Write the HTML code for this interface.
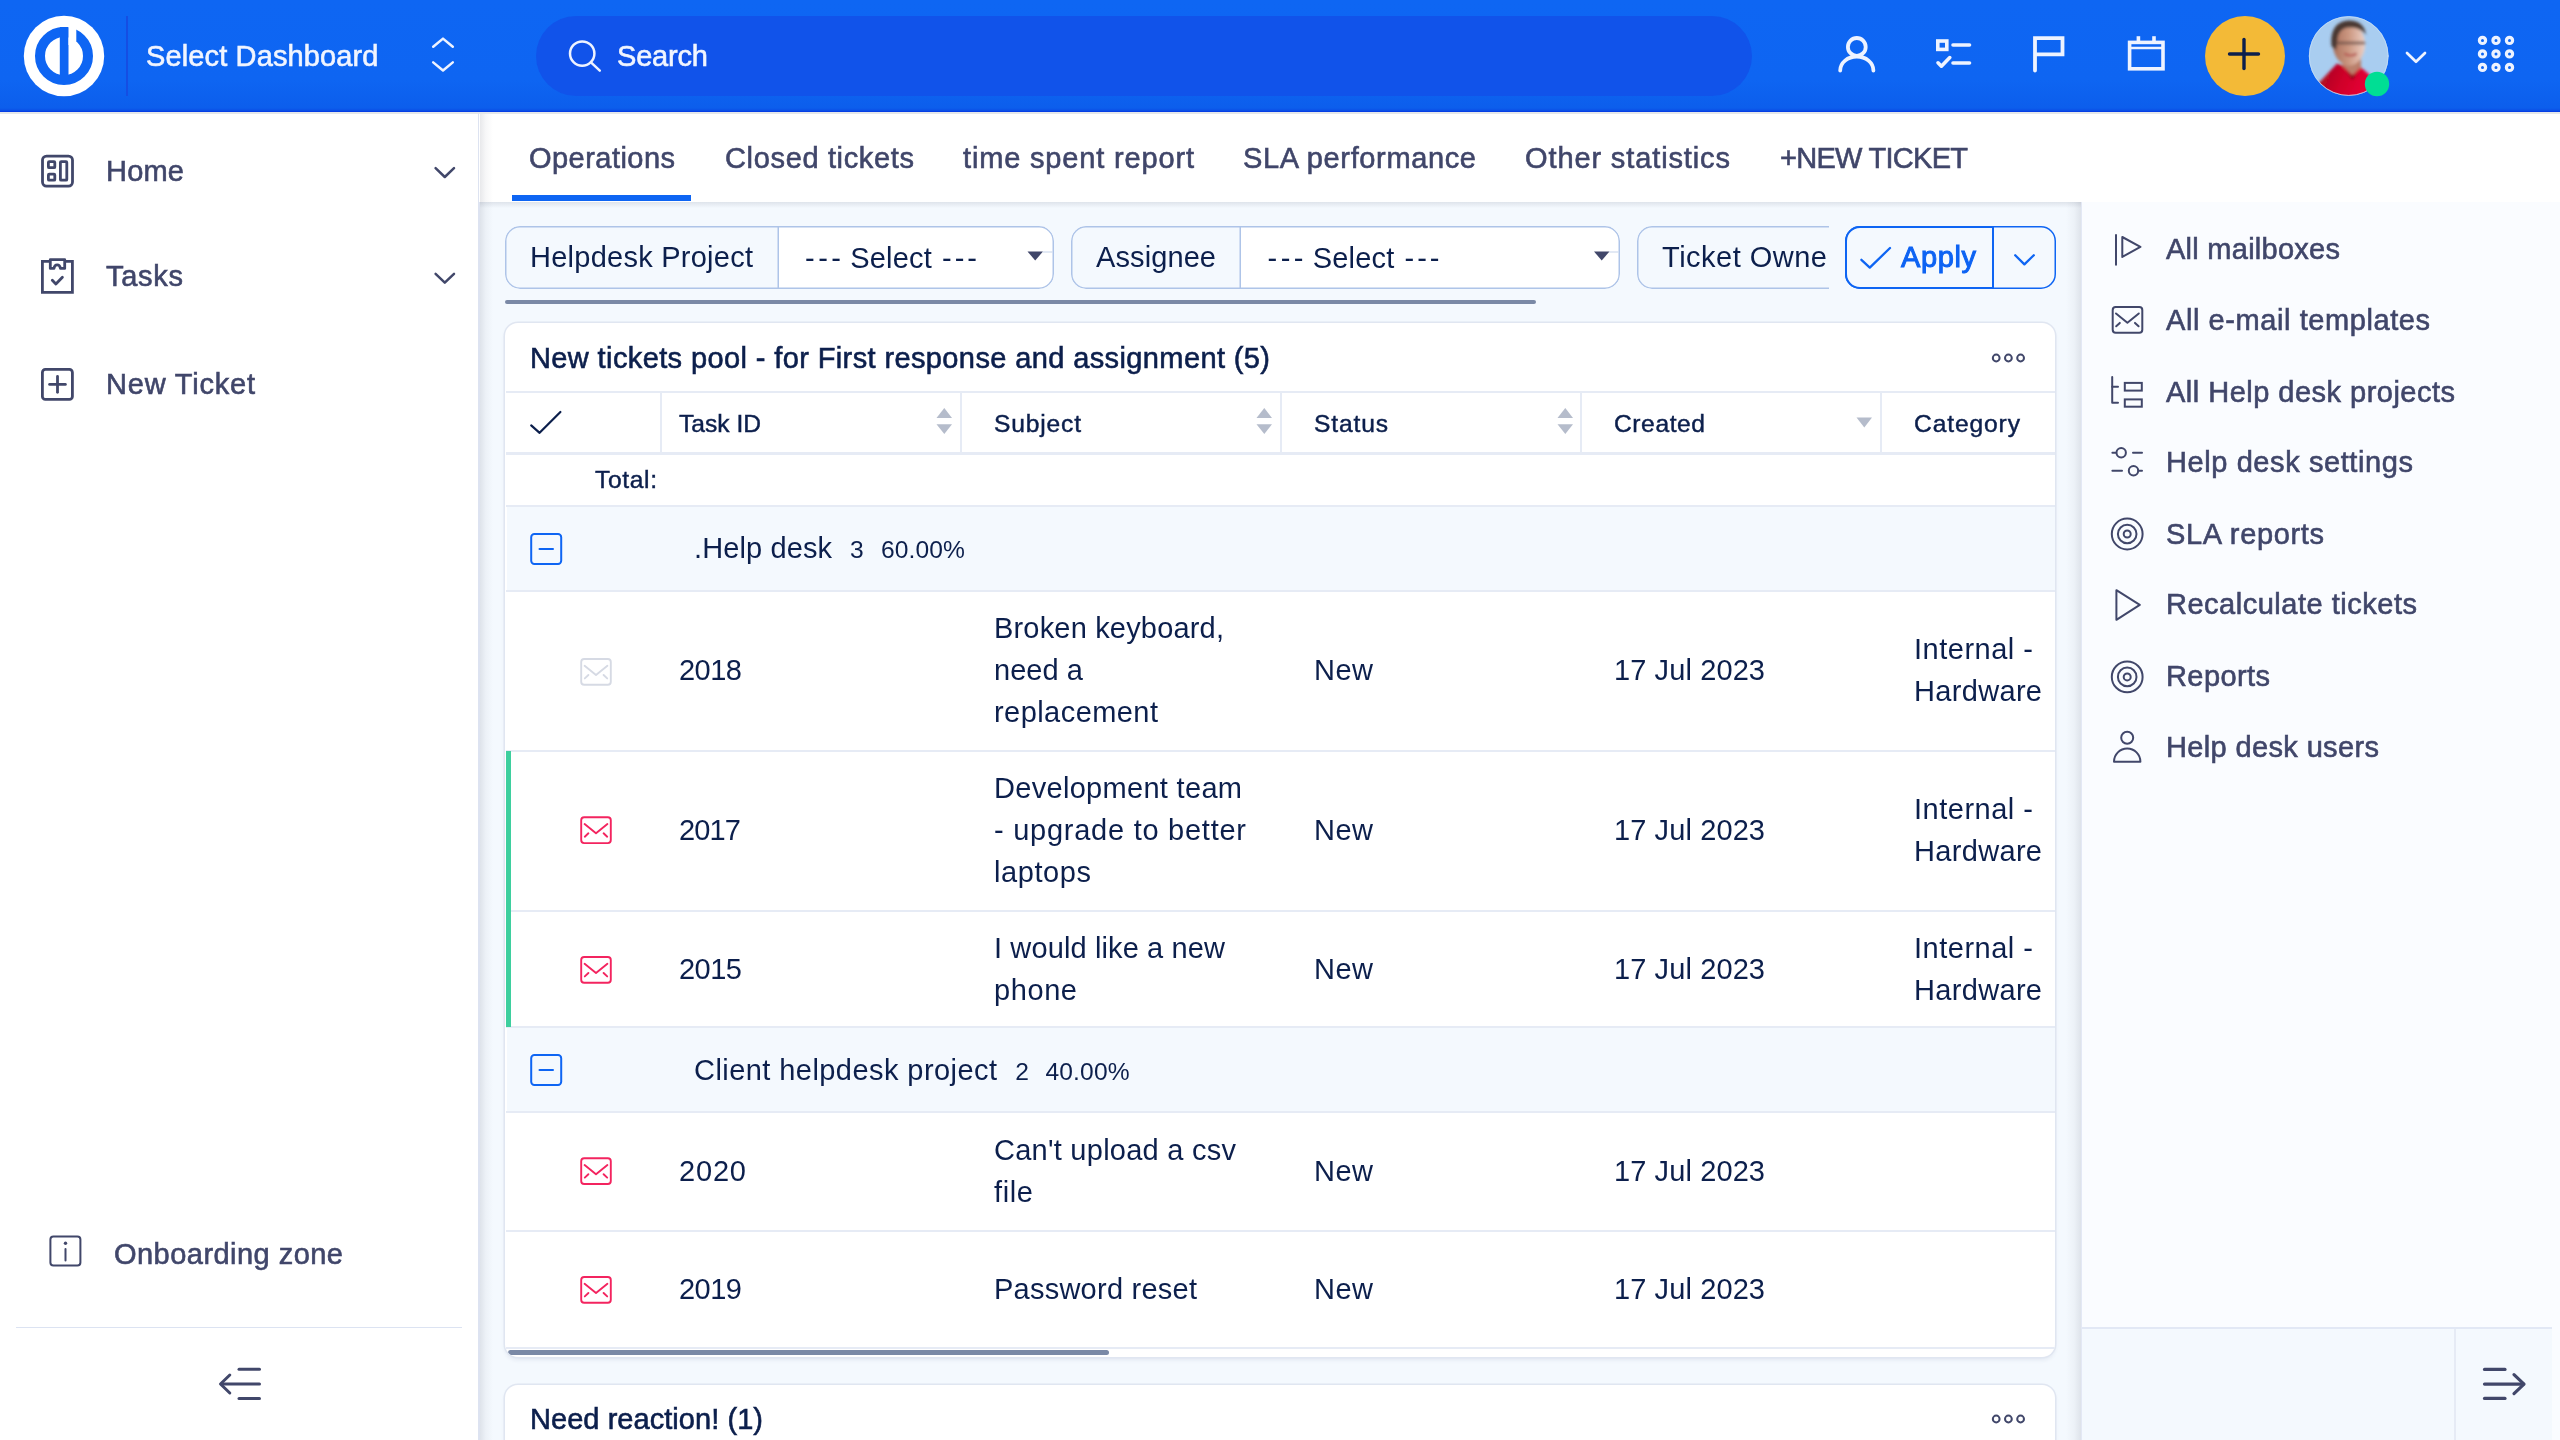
<!DOCTYPE html>
<html lang="en"><head><meta charset="utf-8"><title>Helpdesk dashboard</title>
<style>
html,body{margin:0;padding:0}
body{width:2560px;height:1440px;overflow:hidden;position:relative;background:#f4f9fe;font-family:"Liberation Sans",sans-serif}
.a{position:absolute}
.t{position:absolute;white-space:pre;line-height:1;-webkit-font-smoothing:antialiased}
svg{position:absolute;overflow:visible}
#hdr{left:0;top:0;width:2560px;height:112px;background:linear-gradient(to bottom,#0e66f3 0,#0e65f2 80px,#0c5eec 108px,#0a4fe6 110.5px,#0236e4 112px)}
#pill{left:536px;top:16px;width:1216px;height:80px;border-radius:40px;background:#1153ea}
#side{left:0;top:112px;width:478.5px;height:1328px;background:#fff;border-right:1px solid #dde3f0}
#tabs{left:479px;top:112px;width:2081px;height:89.5px;background:#fff}
#rp{left:2080.5px;top:201.5px;width:480px;height:1239px;background:#fafcff;border-left:1.5px solid #e3e8f5;box-sizing:border-box}
#rpb{left:2082px;top:1327px;width:470px;height:113px;background:#f4f9fe;border-top:2px solid #e2e8f5;box-sizing:border-box}
.card{background:#fff;border-radius:13px;box-shadow:0 0 0 1.5px #e0e6f1, 0 2.5px 4px rgba(40,60,110,.09)}
.hl{position:absolute;height:2px;background:#e6ebf5}
.vl{position:absolute;width:2px;background:#e6ebf5}
.grp{position:absolute;left:507px;width:1549px;background:#f4f9fe}
.pillf{position:absolute;top:225.5px;height:63px;box-sizing:border-box;border-radius:15px;background:#f4f9fe;overflow:hidden}
.pillf::after{content:"";position:absolute;left:0;top:0;right:0;bottom:0;border-radius:15px;box-shadow:inset 0 0 0 1.5px #aec4e8}
.sel{position:absolute;top:0;bottom:0;right:0;background:#fff;box-shadow:-1.5px 0 0 0 #aec4e8}
</style></head><body>
<!-- header -->
<div id="hdr" class="a"></div>
<div id="pill" class="a"></div>
<div class="a" style="left:126px;top:16px;width:2px;height:80px;background:#154ee3"></div>
<!-- sidebar -->
<div id="side" class="a"></div>
<div class="hl" style="left:16px;top:1327px;width:446px;height:1px;background:#dce3f2"></div>
<div class="a" style="left:478.4px;top:113px;width:1.3px;height:1327px;background:#dde3f1"></div>
<!-- tabs -->
<div id="tabs" class="a"></div>
<div class="a" style="left:512px;top:195px;width:179px;height:6px;background:#0e65f3"></div>
<div class="a" style="left:479.5px;top:113px;width:13px;height:1327px;background:linear-gradient(to right,rgba(30,35,60,.10),rgba(30,35,60,.035) 45%,rgba(30,35,60,0))"></div>
<div class="a" style="left:479.5px;top:201.5px;width:1601px;height:6px;background:linear-gradient(to bottom,rgba(30,40,70,.10),rgba(30,40,70,0))"></div>
<div class="a" style="left:2066px;top:201.5px;width:14.5px;height:1239px;background:linear-gradient(to left,rgba(30,35,60,.10),rgba(30,35,60,.035) 45%,rgba(30,35,60,0))"></div>
<div class="a" style="left:0;top:112px;width:2560px;height:1.5px;background:rgba(225,228,232,.9)"></div>
<!-- right panel -->
<div id="rp" class="a"></div>
<div id="rpb" class="a"></div>
<div class="vl" style="left:2454px;top:1329px;height:111px"></div>
<!-- filters -->
<div class="pillf" style="left:504.5px;width:549.5px"><div class="sel" style="left:274px"></div></div>
<div class="pillf" style="left:1070.5px;width:549.5px"><div class="sel" style="left:170px"></div></div>
<div class="a" style="left:1637px;top:225.5px;width:192px;height:63px;overflow:hidden"><div class="pillf" style="left:0;top:0;width:400px"></div></div>
<div class="a" style="left:1845px;top:226px;width:211px;height:63px;box-sizing:border-box;box-shadow:inset 0 0 0 1.5px #0e65f3;border-radius:15px"></div><div class="a" style="left:1845px;top:226px;width:149px;height:63px;box-sizing:border-box;border:2px solid #0e65f3;border-radius:15px 0 0 15px"></div>

<div class="a" style="left:505px;top:299.5px;width:1031px;height:4.5px;border-radius:3px;background:#7a89a6"></div>
<!-- card 1 -->
<div class="a card" style="left:505px;top:323px;width:1550px;height:1034px"></div>
<div class="a" style="left:0;top:0;width:2560px;height:1440px;clip-path:inset(323px 505px 83px 505px round 13px)">
<div class="hl" style="left:506px;top:391px;width:1549px"></div>
<div class="hl" style="left:506px;top:452px;width:1549px;height:3px"></div>
<div class="vl" style="left:660px;top:393px;height:59px"></div>
<div class="vl" style="left:960px;top:393px;height:59px"></div>
<div class="vl" style="left:1280px;top:393px;height:59px"></div>
<div class="vl" style="left:1580px;top:393px;height:59px"></div>
<div class="vl" style="left:1880px;top:393px;height:59px"></div>
<div class="hl" style="left:506px;top:505px;width:1549px"></div>
<div class="grp" style="top:507px;height:84px"></div>
<div class="hl" style="left:506px;top:590px;width:1549px"></div>
<div class="hl" style="left:506px;top:750px;width:1549px"></div>
<div class="hl" style="left:506px;top:910px;width:1549px"></div>
<div class="hl" style="left:506px;top:1026px;width:1549px"></div>
<div class="grp" style="top:1028px;height:84px"></div>
<div class="hl" style="left:506px;top:1111px;width:1549px"></div>
<div class="hl" style="left:506px;top:1230px;width:1549px"></div>
<div class="hl" style="left:506px;top:1347px;width:1549px"></div>
<div class="a" style="left:506px;top:751px;width:4.6px;height:276px;background:#3ecf9e"></div>
<div class="a" style="left:508px;top:1350.3px;width:601px;height:5px;border-radius:3px;background:#7a89a6"></div>
</div>
<!-- card 2 -->
<div class="a card" style="left:505px;top:1385px;width:1550px;height:120px"></div>
<svg width="2560" height="1440" viewBox="0 0 2560 1440" style="left:0;top:0" fill="none" stroke-linecap="round" stroke-linejoin="round">
<!-- logo -->
<circle cx="64" cy="56" r="40.2" fill="#fff"/>
<circle cx="64" cy="56" r="24" stroke="#0e65f3" stroke-width="10"/>
<rect x="59.8" y="27" width="8.7" height="52" fill="#0e65f3"/>
<path d="M68.5 24 H76.3 V41.5 L72.5 45 H68.5 Z" fill="#fff"/>
<!-- select chevrons -->
<g stroke="#eef3ff" stroke-width="2.5"><path d="M433.2 46.7 L443 38.6 L452.8 46.7"/><path d="M433.2 62.4 L443 70.5 L452.8 62.4"/></g>
<!-- search -->
<g stroke="#eef3ff" stroke-width="2.5"><circle cx="582.2" cy="53.6" r="12.2"/><path d="M591.5 62.8 L599.8 70.6"/></g>
<!-- user -->
<g stroke="#eef3ff" stroke-width="3.8"><circle cx="1856.8" cy="46.9" r="8.9"/><path d="M1840.2 70.5 A16.6 14 0 0 1 1873.4 70.5"/></g>
<!-- tasks -->
<g stroke="#eef3ff" stroke-width="3.6"><rect x="1937.8" y="41" width="9" height="8.4" stroke-linejoin="miter"/><path d="M1953 45 H1969.5"/><path d="M1953 63 H1969.5"/><path d="M1938 62.8 L1941.4 66.2 L1949.8 57.6"/></g>
<!-- flag -->
<g stroke="#eef3ff" stroke-width="3.8" stroke-linejoin="miter"><path d="M2035 70.5 V38.2 H2062.5 V54.4 H2035"/></g>
<!-- calendar -->
<g stroke="#eef3ff" stroke-width="3.6" stroke-linejoin="miter" stroke-linecap="butt"><rect x="2129.6" y="42.4" width="33.4" height="26.4"/><path d="M2129.6 48 H2163" stroke-width="2.6"/><path d="M2138.4 36.2 V42"/><path d="M2154 36.2 V42"/></g>
<!-- plus -->
<circle cx="2245" cy="56" r="40" fill="#f3ba37"/>
<g stroke="#0c1f4c" stroke-width="3.4"><path d="M2229.5 54 H2258.5"/><path d="M2244 39.5 V68.5"/></g>
<!-- avatar -->
<defs><clipPath id="avc"><circle cx="2348.7" cy="56" r="39.6"/></clipPath><filter id="bl" x="-20%" y="-20%" width="140%" height="140%"><feGaussianBlur stdDeviation="1.5"/></filter>
<linearGradient id="skin" x1="0" x2="1" y1="0" y2="0"><stop offset="0" stop-color="#a96f59"/><stop offset="0.5" stop-color="#cc9882"/><stop offset="1" stop-color="#ecd0c5"/></linearGradient>
<linearGradient id="shirt" x1="0" x2="1" y1="0" y2="0.3"><stop offset="0" stop-color="#9c0b1e"/><stop offset="0.5" stop-color="#cf0329"/><stop offset="1" stop-color="#ec0438"/></linearGradient></defs>
<circle cx="2348.7" cy="56" r="39.8" fill="#a9cdf0"/>
<g clip-path="url(#avc)"><g filter="url(#bl)" stroke="none">
<path d="M2316 86 L2337 63.5 L2344 66 L2352 74 L2360.5 67 L2371 76 L2378 104 L2316 104 Z" fill="url(#shirt)"/>
<path d="M2340 56 L2361 56 L2361 67 L2352.5 75 L2343 66 Z" fill="#b9806c"/>
<path d="M2346 70 L2352.5 80 L2357 72 L2352.5 76 Z" fill="#7a0a18"/>
<ellipse cx="2349" cy="44.5" rx="16" ry="21" fill="url(#skin)"/>
<path d="M2331.5 46 C2330 30 2336 21.5 2348 20.5 C2358 20 2365 25 2366 35 C2362 29.5 2356 27 2349 27.5 C2342 28 2338.5 32 2337.5 39 C2337 43 2337 46 2336 50 Z" fill="#4a3933"/>
<path d="M2338 43 H2364" stroke="#6a4d45" stroke-width="3.2" opacity=".75"/>
<path d="M2345 54 Q2351 57 2356 54" stroke="#b5524f" stroke-width="2.2" fill="none"/>
</g></g>
<circle cx="2348.7" cy="56" r="39.4" stroke="#c6ddf6" stroke-width="1" fill="none" opacity=".8"/>
<circle cx="2377" cy="84" r="12.2" fill="#00de94"/>
<path d="M2407 53 L2416 61.8 L2425 53" stroke="#eef3ff" stroke-width="2.7"/>
<!-- grid -->
<g stroke="#eef3ff" stroke-width="3.2">
<circle cx="2482.5" cy="40.4" r="3.1"/><circle cx="2496" cy="40.4" r="3.1"/><circle cx="2509.5" cy="40.4" r="3.1"/>
<circle cx="2482.5" cy="53.9" r="3.1"/><circle cx="2496" cy="53.9" r="3.1"/><circle cx="2509.5" cy="53.9" r="3.1"/>
<circle cx="2482.5" cy="67.4" r="3.1"/><circle cx="2496" cy="67.4" r="3.1"/><circle cx="2509.5" cy="67.4" r="3.1"/>
</g>
<!-- sidebar icons -->
<g stroke="#41476a" stroke-width="2.8">
<rect x="42.5" y="156.1" width="30" height="30" rx="4"/>
<rect x="48.4" y="161.7" width="6.4" height="6" rx="0.8"/><rect x="48.4" y="174.2" width="6.4" height="6" rx="0.8"/><rect x="60.4" y="161.7" width="6.4" height="18.5" rx="0.8"/>
<path d="M49.5 261.4 H42.4 V292.3 H72.4 V261.4 H65.3" stroke-linejoin="miter"/>
<path d="M50.3 259.6 H64.7 V268.4 H60.4 C59.8 263.8 54.6 263.8 54 268.4 H50.3 Z"/>
<path d="M52.3 280.3 L55.9 284 L62.4 277.2"/>
<rect x="42.4" y="369.4" width="30" height="30" rx="3"/><path d="M49.6 384.4 H65.4"/><path d="M57.5 376.5 V392.3"/>
</g>
<g stroke="#41476a" stroke-width="2.5"><path d="M435.6 168.2 L444.8 177 L454 168.2"/><path d="M435.6 273.9 L444.8 282.7 L454 273.9"/></g>
<g stroke="#41476a" stroke-width="2"><rect x="50.4" y="1236.4" width="30" height="29.2" rx="3"/><path d="M65.5 1249 V1260.4"/></g>
<circle cx="65.5" cy="1243.2" r="1.7" fill="#41476a"/>
<g stroke="#41476a" stroke-width="3"><path d="M239 1369.3 H259.5"/><path d="M221.5 1384 H259.5"/><path d="M239 1398.4 H259.5"/><path d="M229.8 1375 L220.5 1384 L229.8 1393"/></g>
<g stroke="#41476a" stroke-width="3.2"><path d="M2484.5 1369.4 H2505"/><path d="M2484.5 1384.1 H2523.5"/><path d="M2484.5 1398.4 H2505"/><path d="M2514 1374.6 L2524 1384.1 L2514 1393.6"/></g>
<!-- filter arrows -->
<g fill="#41476a" stroke="none"><path d="M1027.5 251.5 H1043 L1035.2 260.5 Z"/><path d="M1594 251.5 H1609.5 L1601.7 260.5 Z"/></g>
<g stroke="#c5d3ea" stroke-width="1"><path d="M1043 252 H1052"/><path d="M1609.5 252 H1618"/></g>
<!-- apply -->
<g stroke="#0e65f3" stroke-width="2.3"><path d="M1861.4 259.8 L1869.8 267.6 L1890 248"/><path d="M2015.2 255.2 L2024.4 264.4 L2033.8 255.2"/></g>
<!-- ooo -->
<g stroke="#41476a" stroke-width="2"><circle cx="1996.2" cy="358" r="3.4"/><circle cx="2008.4" cy="358" r="3.4"/><circle cx="2020.6" cy="358" r="3.4"/>
<circle cx="1996.2" cy="1419" r="3.4"/><circle cx="2008.4" cy="1419" r="3.4"/><circle cx="2020.6" cy="1419" r="3.4"/></g>
<!-- header check -->
<path d="M531.2 425.4 L539.6 432.8 L560.4 412" stroke="#0c1f4c" stroke-width="2.2"/>
<!-- sort arrows -->
<g fill="#b5bccb" stroke="none">
<path d="M936.5 418 L944.3 408 L952 418 Z"/><path d="M936.5 424.3 H952 L944.3 434 Z"/>
<path d="M1256.5 418 L1264.3 408 L1272 418 Z"/><path d="M1256.5 424.3 H1272 L1264.3 434 Z"/>
<path d="M1557.5 418 L1565.3 408 L1573 418 Z"/><path d="M1557.5 424.3 H1573 L1565.3 434 Z"/>
<path d="M1856.5 417.5 H1872 L1864.3 427.5 Z"/>
</g>
<!-- group toggles -->
<g stroke="#0e65f3" stroke-width="2"><rect x="531.2" y="534" width="30" height="30" rx="3.2"/><path d="M539.5 549 H553"/>
<rect x="531.2" y="1055" width="30" height="30" rx="3.2"/><path d="M539.5 1070 H553"/></g>
<!-- mail icons -->
<g id="ml" stroke-width="1.9"><rect x="581.2" y="659" width="29.6" height="25.8" rx="3"/><path d="M584.6 665.8 L596 675 L607.4 665.8"/><path d="M584.8 678.4 L588.4 675"/><path d="M607.2 678.4 L603.6 675"/></g>
</svg>
<svg width="2560" height="1440" viewBox="0 0 2560 1440" style="left:0;top:0" fill="none" stroke-linecap="round" stroke-linejoin="round">
<g stroke="#d6dae4"><use href="#ml"/></g>
<g stroke="#f3245f"><use href="#ml" y="158.3"/><use href="#ml" y="298"/><use href="#ml" y="499.2"/><use href="#ml" y="618"/></g>
<!-- right panel icons -->
<g stroke="#41476a" stroke-width="2">
<path d="M2116 235 V264.8"/><path d="M2122.3 237 L2140.4 246.9 L2122.3 256.9 Z"/>
<rect x="2112.7" y="307" width="29.6" height="25.8" rx="3"/><path d="M2116 313.5 L2127.4 322.7 L2138.8 313.5"/><path d="M2116.2 326.3 L2119.8 322.9"/><path d="M2138.6 326.3 L2135 322.9"/>
<path d="M2112.2 377 V402.8 H2118"/><path d="M2112.2 386.7 H2118"/><rect x="2124.8" y="382.9" width="17" height="7.7" stroke-linejoin="miter"/><rect x="2124.8" y="399.4" width="17" height="7.3" stroke-linejoin="miter"/>
<circle cx="2121.2" cy="452.8" r="4.7"/><path d="M2112.4 452.8 H2116"/><path d="M2133 452.8 H2142"/><circle cx="2133.5" cy="470.8" r="4.7"/><path d="M2112.4 470.8 H2122"/><path d="M2138.6 470.8 H2142"/>
<circle cx="2127.2" cy="534" r="15.4"/><circle cx="2127.2" cy="534" r="9.3"/><circle cx="2127.2" cy="534" r="3.5"/>
<path d="M2116.4 590.2 L2139.8 604.9 L2116.4 619.8 Z"/>
<circle cx="2127.2" cy="676.9" r="15.4"/><circle cx="2127.2" cy="676.9" r="9.3"/><circle cx="2127.2" cy="676.9" r="3.5"/>
<circle cx="2127.2" cy="737.7" r="6"/><path d="M2114 761.7 A13.2 13.2 0 0 1 2140.4 761.7 Z"/>
</g>
</svg>

<div style="position:absolute;left:0;top:0;width:2560px;height:1440px;will-change:transform">
<span class="t" style="left:146px;top:42px;font-size:29px;color:#f1f5ff;letter-spacing:0.131px;-webkit-text-stroke:0.6px #f1f5ff">Select Dashboard</span>
<span class="t" style="left:617px;top:42px;font-size:29px;color:#f1f5ff;letter-spacing:-0.178px;-webkit-text-stroke:0.6px #f1f5ff">Search</span>
<span class="t" style="left:106px;top:157px;font-size:29px;color:#40466a;letter-spacing:0.214px;-webkit-text-stroke:0.6px #40466a">Home</span>
<span class="t" style="left:106px;top:262px;font-size:29px;color:#40466a;letter-spacing:0.715px;-webkit-text-stroke:0.6px #40466a">Tasks</span>
<span class="t" style="left:106px;top:370px;font-size:29px;color:#40466a;letter-spacing:0.797px;-webkit-text-stroke:0.6px #40466a">New Ticket</span>
<span class="t" style="left:114px;top:1240px;font-size:29px;color:#40466a;letter-spacing:0.464px;-webkit-text-stroke:0.6px #40466a">Onboarding zone</span>
<span class="t" style="left:529px;top:144px;font-size:29px;color:#40466a;letter-spacing:0.460px;-webkit-text-stroke:0.6px #40466a">Operations</span>
<span class="t" style="left:725px;top:144px;font-size:29px;color:#40466a;letter-spacing:0.653px;-webkit-text-stroke:0.6px #40466a">Closed tickets</span>
<span class="t" style="left:963px;top:144px;font-size:29px;color:#40466a;letter-spacing:0.837px;-webkit-text-stroke:0.6px #40466a">time spent report</span>
<span class="t" style="left:1243px;top:144px;font-size:29px;color:#40466a;letter-spacing:0.637px;-webkit-text-stroke:0.6px #40466a">SLA performance</span>
<span class="t" style="left:1525px;top:144px;font-size:29px;color:#40466a;letter-spacing:0.881px;-webkit-text-stroke:0.6px #40466a">Other statistics</span>
<span class="t" style="left:1780px;top:144px;font-size:29px;color:#40466a;letter-spacing:-0.725px;-webkit-text-stroke:0.6px #40466a">+NEW TICKET</span>
<span class="t" style="left:530px;top:243px;font-size:29px;color:#0c1f4c;letter-spacing:0.252px">Helpdesk Project</span>
<span class="t" style="left:805px;top:244px;font-size:29px;color:#0c1f4c;letter-spacing:3.508px">---</span>
<span class="t" style="left:850.3px;top:244px;font-size:29px;color:#0c1f4c;letter-spacing:0.178px">Select</span>
<span class="t" style="left:942px;top:244px;font-size:29px;color:#0c1f4c;letter-spacing:3.008px">---</span>
<span class="t" style="left:1096px;top:243px;font-size:29px;color:#0c1f4c;letter-spacing:0.098px">Assignee</span>
<span class="t" style="left:1267.5px;top:244px;font-size:29px;color:#0c1f4c;letter-spacing:3.508px">---</span>
<span class="t" style="left:1312.8px;top:244px;font-size:29px;color:#0c1f4c;letter-spacing:0.178px">Select</span>
<span class="t" style="left:1404.5px;top:244px;font-size:29px;color:#0c1f4c;letter-spacing:3.008px">---</span>
<span class="t" style="left:1662px;top:243px;font-size:29px;color:#0c1f4c;letter-spacing:0.491px">Ticket Owne</span>
<span class="t" style="left:1901px;top:243px;font-size:29px;color:#0d63f3;letter-spacing:0.613px;-webkit-text-stroke:1.0px #0d63f3">Apply</span>
<span class="t" style="left:530px;top:344px;font-size:29px;color:#0c1f4c;letter-spacing:0.385px;-webkit-text-stroke:0.6px #0c1f4c">New tickets pool - for First response and assignment (5)</span>
<span class="t" style="left:679px;top:412px;font-size:24.6px;color:#0c1f4c;letter-spacing:0.000px;-webkit-text-stroke:0.45px #0c1f4c">Task ID</span>
<span class="t" style="left:994px;top:412px;font-size:24.6px;color:#0c1f4c;letter-spacing:0.828px;-webkit-text-stroke:0.45px #0c1f4c">Subject</span>
<span class="t" style="left:1314px;top:412px;font-size:24.6px;color:#0c1f4c;letter-spacing:0.853px;-webkit-text-stroke:0.45px #0c1f4c">Status</span>
<span class="t" style="left:1614px;top:412px;font-size:24.6px;color:#0c1f4c;letter-spacing:0.583px;-webkit-text-stroke:0.45px #0c1f4c">Created</span>
<span class="t" style="left:1914px;top:412px;font-size:24.6px;color:#0c1f4c;letter-spacing:0.886px;-webkit-text-stroke:0.45px #0c1f4c">Category</span>
<span class="t" style="left:595px;top:468px;font-size:24.6px;color:#0c1f4c;letter-spacing:0.641px;-webkit-text-stroke:0.45px #0c1f4c">Total:</span>
<span class="t" style="left:694px;top:534px;font-size:29px;color:#0c1f4c;letter-spacing:0.109px">.Help desk</span>
<span class="t" style="left:850px;top:538px;font-size:24.6px;color:#0c1f4c;letter-spacing:0.000px">3</span>
<span class="t" style="left:881px;top:538px;font-size:24.6px;color:#0c1f4c;letter-spacing:0.116px">60.00%</span>
<span class="t" style="left:679px;top:656px;font-size:29px;color:#0c1f4c;letter-spacing:-0.505px">2018</span>
<span class="t" style="left:994px;top:614px;font-size:29px;color:#0c1f4c;letter-spacing:0.179px">Broken keyboard,</span>
<span class="t" style="left:994px;top:656px;font-size:29px;color:#0c1f4c;letter-spacing:0.059px">need a</span>
<span class="t" style="left:994px;top:698px;font-size:29px;color:#0c1f4c;letter-spacing:0.441px">replacement</span>
<span class="t" style="left:1314px;top:656px;font-size:29px;color:#0c1f4c;letter-spacing:0.492px">New</span>
<span class="t" style="left:1614px;top:656px;font-size:29px;color:#0c1f4c;letter-spacing:0.103px">17 Jul 2023</span>
<span class="t" style="left:1914px;top:635px;font-size:29px;color:#0c1f4c;letter-spacing:0.505px">Internal -</span>
<span class="t" style="left:1914px;top:677px;font-size:29px;color:#0c1f4c;letter-spacing:0.326px">Hardware</span>
<span class="t" style="left:679px;top:816px;font-size:29px;color:#0c1f4c;letter-spacing:-0.839px">2017</span>
<span class="t" style="left:994px;top:774px;font-size:29px;color:#0c1f4c;letter-spacing:0.306px">Development team</span>
<span class="t" style="left:994px;top:816px;font-size:29px;color:#0c1f4c;letter-spacing:0.744px">- upgrade to better</span>
<span class="t" style="left:994px;top:858px;font-size:29px;color:#0c1f4c;letter-spacing:0.581px">laptops</span>
<span class="t" style="left:1314px;top:816px;font-size:29px;color:#0c1f4c;letter-spacing:0.492px">New</span>
<span class="t" style="left:1614px;top:816px;font-size:29px;color:#0c1f4c;letter-spacing:0.103px">17 Jul 2023</span>
<span class="t" style="left:1914px;top:795px;font-size:29px;color:#0c1f4c;letter-spacing:0.505px">Internal -</span>
<span class="t" style="left:1914px;top:837px;font-size:29px;color:#0c1f4c;letter-spacing:0.326px">Hardware</span>
<span class="t" style="left:679px;top:955px;font-size:29px;color:#0c1f4c;letter-spacing:-0.505px">2015</span>
<span class="t" style="left:994px;top:934px;font-size:29px;color:#0c1f4c;letter-spacing:0.123px">I would like a new</span>
<span class="t" style="left:994px;top:976px;font-size:29px;color:#0c1f4c;letter-spacing:0.586px">phone</span>
<span class="t" style="left:1314px;top:955px;font-size:29px;color:#0c1f4c;letter-spacing:0.492px">New</span>
<span class="t" style="left:1614px;top:955px;font-size:29px;color:#0c1f4c;letter-spacing:0.103px">17 Jul 2023</span>
<span class="t" style="left:1914px;top:934px;font-size:29px;color:#0c1f4c;letter-spacing:0.505px">Internal -</span>
<span class="t" style="left:1914px;top:976px;font-size:29px;color:#0c1f4c;letter-spacing:0.326px">Hardware</span>
<span class="t" style="left:694px;top:1056px;font-size:29px;color:#0c1f4c;letter-spacing:0.437px">Client helpdesk project</span>
<span class="t" style="left:1015.2px;top:1060px;font-size:24.6px;color:#0c1f4c;letter-spacing:0.000px">2</span>
<span class="t" style="left:1045.4px;top:1060px;font-size:24.6px;color:#0c1f4c;letter-spacing:0.156px">40.00%</span>
<span class="t" style="left:679px;top:1157px;font-size:29px;color:#0c1f4c;letter-spacing:0.828px">2020</span>
<span class="t" style="left:994px;top:1136px;font-size:29px;color:#0c1f4c;letter-spacing:0.254px">Can&#x27;t upload a csv</span>
<span class="t" style="left:994px;top:1178px;font-size:29px;color:#0c1f4c;letter-spacing:0.641px">file</span>
<span class="t" style="left:1314px;top:1157px;font-size:29px;color:#0c1f4c;letter-spacing:0.492px">New</span>
<span class="t" style="left:1614px;top:1157px;font-size:29px;color:#0c1f4c;letter-spacing:0.103px">17 Jul 2023</span>
<span class="t" style="left:679px;top:1275px;font-size:29px;color:#0c1f4c;letter-spacing:-0.505px">2019</span>
<span class="t" style="left:994px;top:1275px;font-size:29px;color:#0c1f4c;letter-spacing:0.242px">Password reset</span>
<span class="t" style="left:1314px;top:1275px;font-size:29px;color:#0c1f4c;letter-spacing:0.492px">New</span>
<span class="t" style="left:1614px;top:1275px;font-size:29px;color:#0c1f4c;letter-spacing:0.103px">17 Jul 2023</span>
<span class="t" style="left:530px;top:1405px;font-size:29px;color:#0c1f4c;letter-spacing:0.051px;-webkit-text-stroke:0.6px #0c1f4c">Need reaction! (1)</span>
<span class="t" style="left:2166px;top:235px;font-size:29px;color:#40466a;letter-spacing:0.263px;-webkit-text-stroke:0.6px #40466a">All mailboxes</span>
<span class="t" style="left:2166px;top:306px;font-size:29px;color:#40466a;letter-spacing:0.577px;-webkit-text-stroke:0.6px #40466a">All e-mail templates</span>
<span class="t" style="left:2166px;top:378px;font-size:29px;color:#40466a;letter-spacing:0.484px;-webkit-text-stroke:0.6px #40466a">All Help desk projects</span>
<span class="t" style="left:2166px;top:448px;font-size:29px;color:#40466a;letter-spacing:0.590px;-webkit-text-stroke:0.6px #40466a">Help desk settings</span>
<span class="t" style="left:2166px;top:520px;font-size:29px;color:#40466a;letter-spacing:0.647px;-webkit-text-stroke:0.6px #40466a">SLA reports</span>
<span class="t" style="left:2166px;top:590px;font-size:29px;color:#40466a;letter-spacing:0.512px;-webkit-text-stroke:0.6px #40466a">Recalculate tickets</span>
<span class="t" style="left:2166px;top:662px;font-size:29px;color:#40466a;letter-spacing:0.409px;-webkit-text-stroke:0.6px #40466a">Reports</span>
<span class="t" style="left:2166px;top:733px;font-size:29px;color:#40466a;letter-spacing:0.362px;-webkit-text-stroke:0.6px #40466a">Help desk users</span>
</div>
</body></html>
